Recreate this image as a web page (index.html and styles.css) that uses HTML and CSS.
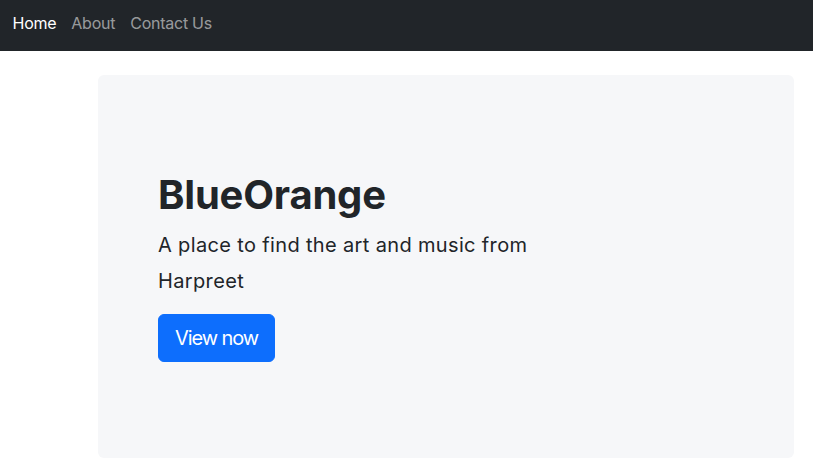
FILE: index.html
```html
<!DOCTYPE html>
<html lang="en">
<head>
<meta charset="utf-8">
<title>BlueOrange</title>
<link rel="stylesheet" href="styles.css">
</head>
<body>
<nav class="navbar">
  <a class="nav-link active" href="#">Home</a>
  <a class="nav-link" href="#">About</a>
  <a class="nav-link" href="#">Contact Us</a>
</nav>
<main class="page">
  <section class="hero">
    <h1 class="hero-title">BlueOrange</h1>
    <p class="hero-lead">A place to find the art and music from Harpreet</p>
    <a class="btn" href="#">View now</a>
  </section>
</main>
</body>
</html>
```
FILE: styles.css
```css
* { box-sizing: border-box; }
html, body { margin: 0; padding: 0; }
body {
  font-family: Inter, "Noto Sans", "Liberation Sans", sans-serif;
  color: #212529;
  background: #fff;
  font-size: 16px;
  line-height: 1.5;
}
.navbar {
  display: flex;
  align-items: center;
  height: 51px;
  background: #212529;
  padding: 0 5px;
}
.nav-link {
  padding: 0 7.5px;
  color: rgba(255, 255, 255, 0.55);
  text-decoration: none;
  font-size: 16px;
  line-height: 24px;
  letter-spacing: -0.25px;
  margin-top: -5px;
}
.nav-link.active { color: #fff; }
.page {
  padding: 24px 19px 7px 98px;
}
.hero {
  background: #f6f7f9;
  border-radius: 6px;
  padding: 96px 60px;
}
.hero-title {
  margin: 0 0 8px;
  font-size: 40px;
  font-weight: 700;
  line-height: 1.2;
  letter-spacing: -0.2px;
}
.hero-lead {
  margin: 0 0 15px;
  font-size: 20px;
  line-height: 36px;
  letter-spacing: 0.35px;
  max-width: 420px;
}
.btn {
  display: inline-block;
  background: #0d6efd;
  color: #fff;
  text-decoration: none;
  font-size: 20px;
  line-height: 30px;
  letter-spacing: -1.1px;
  padding: 8px 16px;
  border: 1px solid #0d6efd;
  border-radius: 6px;
  white-space: nowrap;
}
```
